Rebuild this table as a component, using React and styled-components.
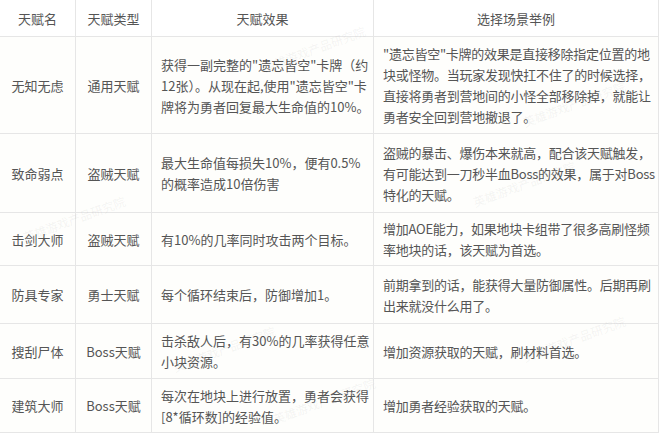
import React from 'react'
import styled, { createGlobalStyle } from 'styled-components'

const GlobalStyle = createGlobalStyle`
  html, body {
    margin: 0;
    padding: 0;
    background: #ffffff;
  }
  body {
    font-family: "Noto Sans CJK SC", "Noto Sans", sans-serif;
  }
`

const rows = [
  {
    name: '无知无虑',
    type: '通用天赋',
    effect: '获得一副完整的"遗忘皆空"卡牌（约12张）。从现在起,使用"遗忘皆空"卡牌将为勇者回复最大生命值的10%。',
    scene: '"遗忘皆空"卡牌的效果是直接移除指定位置的地块或怪物。当玩家发现快扛不住了的时候选择，直接将勇者到营地间的小怪全部移除掉，就能让勇者安全回到营地撤退了。',
    height: 97,
  },
  {
    name: '致命弱点',
    type: '盗贼天赋',
    effect: '最大生命值每损失10%，便有0.5%的概率造成10倍伤害',
    scene: '盗贼的暴击、爆伤本来就高，配合该天赋触发，有可能达到一刀秒半血Boss的效果，属于对Boss特化的天赋。',
    height: 79,
  },
  {
    name: '击剑大师',
    type: '盗贼天赋',
    effect: '有10%的几率同时攻击两个目标。',
    scene: '增加AOE能力，如果地块卡组带了很多高刷怪频率地块的话，该天赋为首选。',
    height: 53,
  },
  {
    name: '防具专家',
    type: '勇士天赋',
    effect: '每个循环结束后，防御增加1。',
    scene: '前期拿到的话，能获得大量防御属性。后期再刷出来就没什么用了。',
    height: 58,
  },
  {
    name: '搜刮尸体',
    type: 'Boss天赋',
    effect: '击杀敌人后，有30%的几率获得任意小块资源。',
    scene: '增加资源获取的天赋，刷材料首选。',
    height: 55,
  },
  {
    name: '建筑大师',
    type: 'Boss天赋',
    effect: '每次在地块上进行放置，勇者会获得[8*循环数]的经验值。',
    scene: '增加勇者经验获取的天赋。',
    height: 54,
  },
]

const marks = [
  { x: 260, y: 40 },
  { x: 520, y: 95 },
  { x: 20, y: 210 },
  { x: 470, y: 175 },
  { x: 170, y: 340 },
  { x: 520, y: 330 },
  { x: 270, y: 392 },
]

const Page = styled.div`
  position: relative;
  width: 660px;
  height: 435px;
  overflow: hidden;
  background: #ffffff;
`

const Table = styled.table`
  margin: -1px 0 0 -1px;
  width: 659px;
  border-collapse: collapse;
  table-layout: fixed;
  font-size: 13px;
  line-height: 21px;
  color: #555555;
`

const HeadCell = styled.th`
  height: 36px;
  padding: 0 4px;
  font-weight: normal;
  text-align: center;
  border: 1px solid #e6e6e6;
  background: #ffffff;
`

const Row = styled.tr`
  height: ${(p) => p.$h}px;
  background: #fefefc;
`

const Cell = styled.td`
  padding: ${(p) => (p.$center ? '5px 4px' : '5px 1px 5px 9px')};
  text-align: ${(p) => (p.$center ? 'center' : 'left')};
  vertical-align: middle;
  border: 1px solid #e6e6e6;
  letter-spacing: ${(p) => (p.$tight ? '-0.25px' : '0')};
  word-break: break-all;
`

const Mark = styled.span`
  position: absolute;
  font-size: 12px;
  color: rgba(150, 150, 150, 0.1);
  transform: rotate(-20deg);
  white-space: nowrap;
  pointer-events: none;
`

export default function App() {
  return (
    <Page>
      <GlobalStyle />
      <Table>
        <colgroup>
          <col style={{ width: 76 }} />
          <col style={{ width: 76 }} />
          <col style={{ width: 222 }} />
          <col style={{ width: 285 }} />
        </colgroup>
        <thead>
          <tr>
            <HeadCell>天赋名</HeadCell>
            <HeadCell>天赋类型</HeadCell>
            <HeadCell>天赋效果</HeadCell>
            <HeadCell>选择场景举例</HeadCell>
          </tr>
        </thead>
        <tbody>
          {rows.map((r) => (
            <Row key={r.name} $h={r.height}>
              <Cell $center>{r.name}</Cell>
              <Cell $center>{r.type}</Cell>
              <Cell>{r.effect}</Cell>
              <Cell $tight>{r.scene}</Cell>
            </Row>
          ))}
        </tbody>
      </Table>
      {marks.map((m, i) => (
        <Mark key={i} style={{ left: m.x, top: m.y }}>
          英雄游戏产品研究院
        </Mark>
      ))}
    </Page>
  )
}
